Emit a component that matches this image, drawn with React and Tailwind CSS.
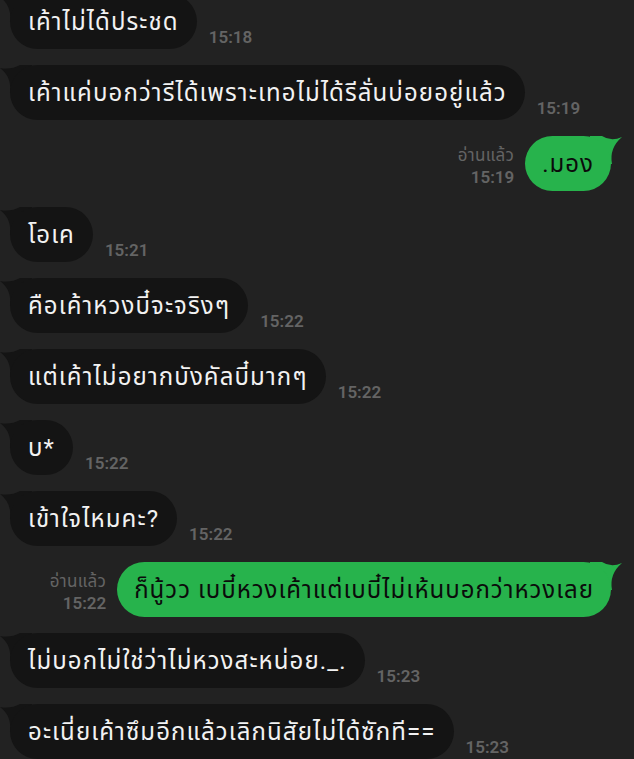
import React from "react";

const FONT = { fontFamily: 'Roboto, "Noto Sans Thai", "Noto Sans", "DejaVu Sans", sans-serif' };

function TailLeft() {
  return (
    <svg className="absolute -left-[10px] top-0" width="32" height="28" viewBox="0 0 32 28">
      <path d="M0 3 Q11 5 20 0 L32 0 L32 28 L10 28 Q12 12 0 3 Z" fill="#141414" />
    </svg>
  );
}

function TailRight() {
  return (
    <svg className="absolute -right-[11px] top-0" width="32" height="28" viewBox="0 0 32 28">
      <path d="M32 1 Q21 6 12 0 L0 0 L0 28 L22 28 Q19 12 32 1 Z" fill="#27b34c" />
    </svg>
  );
}

function In({ text, time, first }) {
  return (
    <div className={`flex items-end pl-[10px] ${first ? "-mt-[6px]" : ""}`}>
      <div className="relative">
        <TailLeft />
        <div className="relative rounded-[28px] bg-[#141414] h-[55px] pl-[18px] pr-[18px] flex items-center text-[24px] tracking-[1.1px] text-[#f2f2f2] whitespace-nowrap">
          {text}
        </div>
      </div>
      <div className="ml-[12px] mb-[3px] text-[17px] font-semibold text-[#646464] leading-none">{time}</div>
    </div>
  );
}

function Out({ text, time }) {
  return (
    <div className="flex items-end justify-end pr-[23px]">
      <div className="mr-[11px] mb-[5px] flex flex-col items-end text-[#646464] leading-none">
        <span className="text-[17px] tracking-[0.3px] mb-[5px]">อ่านแล้ว</span>
        <span className="text-[17px] font-semibold">{time}</span>
      </div>
      <div className="relative">
        <TailRight />
        <div className="relative rounded-[28px] bg-[#27b34c] h-[55px] pl-[17px] pr-[17px] flex items-center text-[24px] tracking-[1px] text-[#0b0b0b] whitespace-nowrap">
          {text}
        </div>
      </div>
    </div>
  );
}

export default function App() {
  return (
    <div className="w-[634px] h-[759px] overflow-hidden bg-[#222222]" style={FONT}>
      <div className="flex flex-col gap-[16px]">
        <In first text="เค้าไม่ได้ประชด" time="15:18" />
        <In text="เค้าแค่บอกว่ารีได้เพราะเทอไม่ได้รีลั่นบ่อยอยู่แล้ว" time="15:19" />
        <Out text=".มอง" time="15:19" />
        <In text="โอเค" time="15:21" />
        <In text="คือเค้าหวงบี๋จะจริงๆ" time="15:22" />
        <In text="แต่เค้าไม่อยากบังคัลบี๋มากๆ" time="15:22" />
        <In text="บ*" time="15:22" />
        <In text="เข้าใจไหมคะ?" time="15:22" />
        <Out text="ก็นู้วว เบบี๋หวงเค้าแต่เบบี๋ไม่เห้นบอกว่าหวงเลย" time="15:22" />
        <In text="ไม่บอกไม่ใช่ว่าไม่หวงสะหน่อย._." time="15:23" />
        <In text="อะเนี่ยเค้าซึมอีกแล้วเลิกนิสัยไม่ได้ซักที==" time="15:23" />
      </div>
    </div>
  );
}
